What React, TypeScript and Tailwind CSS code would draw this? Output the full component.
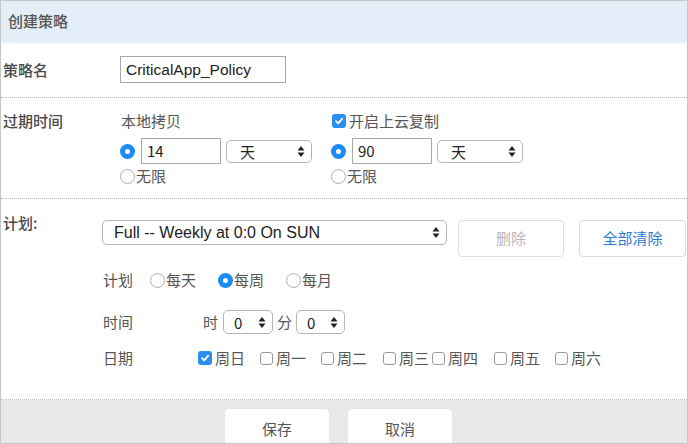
import React from "react";

const FONT = { fontFamily: '"Noto Sans CJK SC", "Liberation Sans", sans-serif' };

function Arrows() {
  return (
    <svg width="8" height="13" viewBox="0 0 8 13" className="shrink-0">
      <path d="M4 1 L7.5 5.5 L0.5 5.5 Z" fill="#222" />
      <path d="M4 12 L7.5 7.5 L0.5 7.5 Z" fill="#222" />
    </svg>
  );
}

function Radio({ on }: { on?: boolean }) {
  return on ? (
    <span className="w-[15px] h-[15px] rounded-full bg-[#1b8cf2] flex items-center justify-center shrink-0">
      <span className="w-[5px] h-[5px] rounded-full bg-white" />
    </span>
  ) : (
    <span className="w-[15px] h-[15px] rounded-full border border-[#adadad] bg-white shrink-0" />
  );
}

function Check({ on }: { on?: boolean }) {
  return on ? (
    <span className="w-[14px] h-[14px] rounded-[3px] bg-[#2b8ff0] flex items-center justify-center shrink-0">
      <svg width="10" height="10" viewBox="0 0 10 10">
        <path d="M2 5.2 L4.2 7.4 L8.2 2.6" stroke="white" strokeWidth="1.8" fill="none" strokeLinecap="round" strokeLinejoin="round" />
      </svg>
    </span>
  ) : (
    <span className="w-[13px] h-[13px] rounded-[3px] border border-[#9a9a9a] bg-white shrink-0" />
  );
}

function Select({ w, h, text, pl }: { w: string; h: string; text: string; pl: string }) {
  return (
    <div className={`${w} ${h} ${pl} pr-[6px] border border-[#b5b5b5] rounded-[5px] bg-white flex items-center justify-between shrink-0 text-[15px] text-[#222]`}>
      <span className="leading-none">{text}</span>
      <Arrows />
    </div>
  );
}

export default function App() {
  const days = [
    { t: "周日", on: true, w: "w-[62px]" },
    { t: "周一", w: "w-[61px]" },
    { t: "周二", w: "w-[62px]" },
    { t: "周三", w: "w-[49px]" },
    { t: "周四", w: "w-[62px]" },
    { t: "周五", w: "w-[61px]" },
    { t: "周六", w: "" },
  ];
  return (
    <div style={FONT} className="w-[688px] h-[444px] overflow-hidden border border-[#c6c6c6] bg-white flex flex-col text-[15px] text-[#555]">
      <div className="h-[43px] bg-[#e3eef8] flex items-center pl-[7px] text-[15px] text-[#555] font-medium shrink-0 border-b-[2px] border-[#edf4fb]">
        创建策略
      </div>

      {/* Row 1 */}
      <div className="h-[54px] shrink-0 border-b border-dotted border-[#bdbdbd] flex items-start pt-[12px]">
        <div className="w-[119px] pl-[2px] pt-[4px] leading-[20px] font-medium text-[#4a4a4a]">策略名</div>
        <div className="w-[166px] h-[27px] border border-[#a9a9a9] flex items-center px-[5px] text-[15.5px] text-[#222]" style={{ fontFamily: '"Liberation Sans", sans-serif' }}>
          CriticalApp_Policy
        </div>
      </div>

      {/* Row 2 */}
      <div className="h-[101px] shrink-0 border-b border-dotted border-[#bdbdbd] flex items-start pt-[13px]">
        <div className="w-[119px] pl-[2px] leading-[20px] font-medium text-[#4a4a4a]">过期时间</div>
        <div className="w-[211px] flex flex-col">
          <div className="h-[20px] leading-[20px] pl-[1px]">本地拷贝</div>
          <div className="mt-[7px] flex items-center h-[26px]">
            <Radio on />
            <div className="ml-[6px] w-[80px] h-[26px] border border-[#a9a9a9] flex items-center px-[5px] text-[15px] text-[#222]">14</div>
            <div className="ml-[5px]"><Select w="w-[86px]" h="h-[23px]" text="天" pl="pl-[13px]" /></div>
          </div>
          <div className="mt-[2px] h-[20px] flex items-center">
            <Radio />
            <span className="ml-[1px]">无限</span>
          </div>
        </div>
        <div className="flex flex-col">
          <div className="h-[20px] flex items-center pl-[1px]">
            <Check on />
            <span className="ml-[3px]">开启上云复制</span>
          </div>
          <div className="mt-[7px] flex items-center h-[26px]">
            <Radio on />
            <div className="ml-[6px] w-[80px] h-[26px] border border-[#a9a9a9] flex items-center px-[5px] text-[15px] text-[#222]">90</div>
            <div className="ml-[5px]"><Select w="w-[86px]" h="h-[23px]" text="天" pl="pl-[13px]" /></div>
          </div>
          <div className="mt-[2px] h-[20px] flex items-center">
            <Radio />
            <span className="ml-[1px]">无限</span>
          </div>
        </div>
      </div>

      {/* Row 3 */}
      <div className="h-[201px] shrink-0 border-b border-dotted border-[#bdbdbd] flex items-start pt-[21px]">
        <div className="w-[101px] pl-[2px] leading-[20px] font-medium text-[#4a4a4a] -mt-[7px]">计划:</div>
        <div className="flex flex-col">
          <div className="flex items-start">
            <div className="w-[345px] h-[25px] pl-[11px] pr-[6px] border border-[#b5b5b5] rounded-[5px] bg-white flex items-center justify-between text-[16px] text-[#222]" style={{ fontFamily: '"Liberation Sans", sans-serif' }}>
              <span>Full -- Weekly at 0:0 On SUN</span>
              <Arrows />
            </div>
            <div className="ml-[11px] w-[106px] h-[37px] border border-[#dedede] rounded-[4px] flex items-center justify-center text-[#b8b8b8]">删除</div>
            <div className="ml-[15px] w-[107px] h-[37px] border border-[#dadada] rounded-[4px] flex items-center justify-center text-[#2b78d6]">全部清除</div>
          </div>
          <div className="mt-[13px] h-[20px] flex items-center pl-[1px]">
            <span className="w-[47px]">计划</span>
            <span className="w-[68px] flex items-center"><Radio /><span className="ml-[1px]">每天</span></span>
            <span className="w-[68px] flex items-center"><Radio on /><span className="ml-[1px]">每周</span></span>
            <span className="flex items-center"><Radio /><span className="ml-[1px]">每月</span></span>
          </div>
          <div className="mt-[20px] h-[24px] flex items-center pl-[1px]">
            <span className="w-[100px]">时间</span>
            <span>时</span>
            <div className="ml-[5px]"><Select w="w-[50px]" h="h-[24px]" text="0" pl="pl-[10px]" /></div>
            <span className="ml-[4px]">分</span>
            <div className="ml-[4px]"><Select w="w-[49px]" h="h-[24px]" text="0" pl="pl-[10px]" /></div>
          </div>
          <div className="mt-[14px] h-[20px] flex items-center pl-[1px]">
            <span className="w-[95px]">日期</span>
            {days.map((d) => (
              <span key={d.t} className={`${d.w} flex items-center`}>
                <Check on={d.on} />
                <span className="ml-[3px]">{d.t}</span>
              </span>
            ))}
          </div>
        </div>
      </div>

      {/* Footer */}
      <div className="flex-1 bg-[#e9e9e9] flex items-start pt-[9px] pl-[224px] gap-[19px]">
        <div className="w-[104px] h-[40px] bg-white rounded-[4px] flex items-center justify-center text-[#555] text-[15px] shadow-[0_0_1px_rgba(0,0,0,0.15)]">保存</div>
        <div className="w-[104px] h-[40px] bg-white rounded-[4px] flex items-center justify-center text-[#555] text-[15px] shadow-[0_0_1px_rgba(0,0,0,0.15)]">取消</div>
      </div>
    </div>
  );
}
